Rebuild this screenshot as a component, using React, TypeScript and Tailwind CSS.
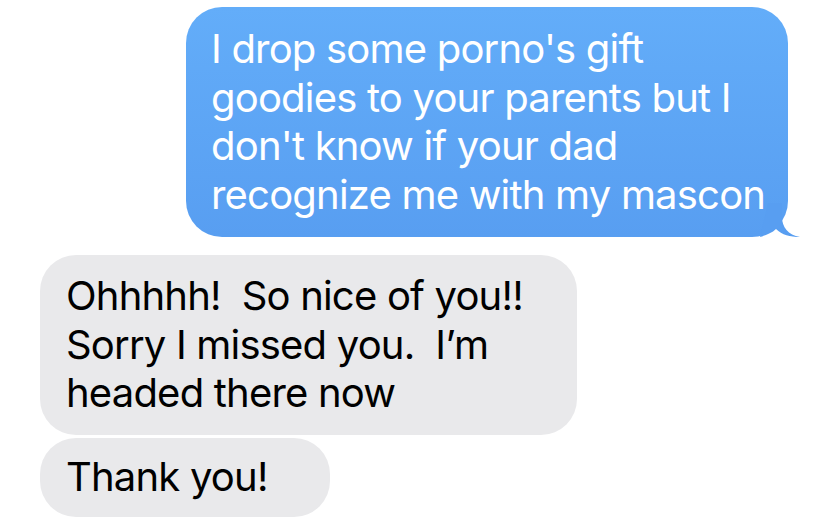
import React from 'react'

const font = { fontFamily: 'Inter, "Noto Sans", sans-serif' }

export default function App() {
  return (
    <div className="w-[828px] h-[519px] overflow-hidden bg-white flex flex-col pt-[7px] text-[40px] leading-[48.5px] tracking-[-0.8px]" style={font}>
      <div className="flex justify-end pr-[40px]">
        <div className="relative w-[602px] h-[230px] rounded-[36px] bg-gradient-to-b from-[#63adf9] to-[#589ef1] text-white pl-[25px] pt-[18px]">
          <p>I drop some porno's gift</p>
          <p>goodies to your parents but I</p>
          <p>don't know if your dad</p>
          <p>recognize me with my mascon</p>
          <svg className="absolute right-[-12px] bottom-0" width="40" height="34" viewBox="0 0 40 34">
            <path d="M8 0 H22 V14 C22 24 28 32 40 34 C30 34 22 32 16 26 C12 30 6 32 0 34 Z" fill="#589ef1" />
          </svg>
        </div>
      </div>
      <div className="mt-[18px] pl-[40px] flex flex-col gap-[3px] text-black">
        <div className="w-[537px] h-[180px] rounded-[36px] bg-[#e9e9eb] pl-[26px] pt-[17px]">
          <p className="whitespace-pre">Ohhhhh!  So nice of you!!</p>
          <p className="whitespace-pre">Sorry I missed you.  I’m</p>
          <p>headed there now</p>
        </div>
        <div className="w-[290px] h-[79px] rounded-[36px] bg-[#e9e9eb] pl-[26px] pt-[15px]">
          <p>Thank you!</p>
        </div>
      </div>
    </div>
  )
}
